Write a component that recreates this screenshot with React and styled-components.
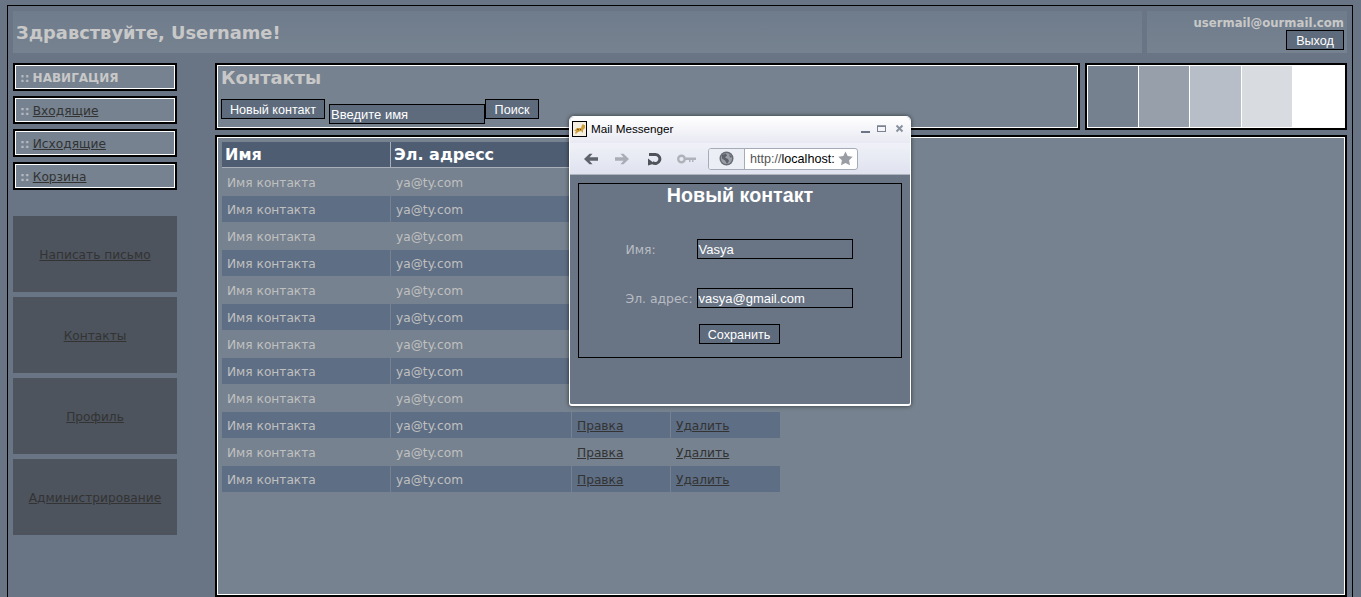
import React from 'react';
import styled, { createGlobalStyle } from 'styled-components';

const Global = createGlobalStyle`
  html, body { margin: 0; height: 597px; overflow: hidden; background: #697585; }
  body { font-family: "DejaVu Sans", sans-serif; }
  * { box-sizing: border-box; }
`;
const Frame = styled.div`
  position: relative; margin: 5px 8px 0 7px; height: 592px; padding: 5px 5px 0 5px;
  border: 1px solid #000; border-bottom: 0;
`;
const Header = styled.header`display: flex; gap: 5px; height: 42px;`;
const Cell = styled.div`background: linear-gradient(#6f7c8c, #76828f);`;
const Greeting = styled(Cell)`
  flex: 1; display: flex; align-items: center; padding: 0 3px;
  font-size: 17.85px; font-weight: bold; color: #c8c8c8;
`;
const Account = styled(Cell)`
  width: 200px; display: flex; flex-direction: column; align-items: flex-end; padding: 5px 3px 0 0;
  font-size: 11.7px; line-height: 14px; font-weight: bold; color: #c8c8c8;
`;
const Btn = styled.button`
  height: 20px; padding: 1px 8px 0; border: 1px solid #000; background: #5e6b7d; color: #fff;
  font: 12.6px "Liberation Sans", sans-serif;
`;
const ExitBtn = styled(Btn)`width: 58px; padding: 1px 0 0;`;
const SearchBtn = styled(Btn)`width: 54px; padding: 1px 0 0;`;
const Body = styled.div`display: flex; gap: 38px; margin-top: 10px;`;
const Side = styled.nav`width: 164px; flex: none; display: flex; flex-direction: column;`;
const framed = `border: 2px solid #000; box-shadow: inset 0 0 0 1px #fff;`;
const NavItem = styled.div`
  ${framed} height: 28px; margin-bottom: 5px; padding: 1px 5px 0; display: flex; align-items: center; gap: 3px;
  background: #76828f; font-size: ${p => p.$head ? '12px' : '12.2px'}; color: #c8c8c8;
  font-weight: ${p => p.$head ? 'bold' : 'normal'};
`;
const Dots = styled.span`color: #b4b9c0; font-weight: bold;`;
const NavLink = styled.a`color: #333; text-decoration: underline;`;
const Blocks = styled.div`display: flex; flex-direction: column; gap: 5px; margin-top: 21px;`;
const Block = styled.div`
  height: 76px; padding-top: 1px; background: #4d545e; display: flex; align-items: center; justify-content: center;
  font-size: 12.2px; color: #333; text-decoration: underline;
`;
const Main = styled.main`flex: 1; min-width: 0; display: flex; flex-direction: column; gap: 5px;`;
const TopRow = styled.div`display: flex; gap: 5px; height: 67px;`;
const ContactsPanel = styled.section`${framed} flex: 1; padding: 1px 4px; background: #76828f;`;
const Title = styled.h1`margin: 0; font-size: 17.85px; font-weight: bold; color: #c8c8c8; line-height: 23px;`;
const Tools = styled.div`display: flex; align-items: flex-start; margin-top: 10px;`;
const SearchBox = styled.div`
  width: 156px; height: 20px; margin: 5px 0 0 4px; border: 1px solid #000; background: #5e6b7d;
  color: #fff; font: 13px/20px "Liberation Sans", sans-serif; padding-left: 1px;
`;
const Swatches = styled.div`${framed} width: 262px; padding: 1px; display: flex; background: #fff;`;
const Swatch = styled.div`flex: 1; background: ${p => p.$c}; border-right: 1px solid #fff;`;
const TablePanel = styled.section`${framed} height: 462px; padding: 4px 0 0 5px; background: #76828f;`;
const Table = styled.table`
  border-collapse: separate; border-spacing: 0 1px; table-layout: fixed; width: 559px; font-size: 12.2px;
`;
const Th = styled.th`
  height: 26px; padding: 0 3px; text-align: left; font-size: 16px; color: #fff; background: #4e5d72;
  border-right: 1px solid #a9b0ba; border-bottom: 1px solid #a9b0ba;
`;
const Td = styled.td`
  height: 26px; padding: 1px 5px 0; color: #c0c0c0; background: ${p => p.$dark ? '#5e6e84' : 'transparent'};
  border-right: 1px solid #76828f;
  a { color: #333; }
`;
const Popup = styled.div`
  position: absolute; left: 561px; top: 110px; width: 342px; height: 290px; border-radius: 5px 5px 3px 3px;
  background: #697585; border: 1px solid #fff; border-bottom-width: 2px; box-shadow: 0 0 4px rgba(0,0,0,.6);
  overflow: hidden; display: flex; flex-direction: column;
`;
const TitleBar = styled.div`
  height: 26px; flex: none; display: flex; align-items: center; gap: 4px; padding: 0 6px 3px 2px;
  background: linear-gradient(#fff, #e8e9f2); font: 11.7px "Liberation Sans", sans-serif; color: #000;
`;
const AppIcon = styled.svg`flex: none;`;
const Spacer = styled.div`flex: 1;`;
const Toolbar = styled.div`
  height: 32px; flex: none; display: flex; align-items: center; padding: 0 0 0 14px;
  background: linear-gradient(#f0f1f8, #dfe2ef); border-bottom: 1px solid #aeb3bd;
`;
const ToolIcon = styled.svg`flex: none; margin-right: ${p => p.$mr}px;`;
const Address = styled.div`
  width: 150px; height: 22px; display: flex; border: 1px solid #a6abb8; border-radius: 3px; background: #fff; overflow: hidden;
`;
const Globe = styled.div`width: 36px; flex: none; display: flex; align-items: center; justify-content: center; background: #eceef5; border-right: 1px solid #a6abb8;`;
const Url = styled.div`
  flex: 1; min-width: 0; display: flex; align-items: center; justify-content: space-between; padding: 0 4px 0 5px;
  font: 12.6px "Liberation Sans", sans-serif; color: #000; white-space: nowrap;
  span { color: #555; }
`;
const Form = styled.form`
  margin: 8px 8px 0 8px; height: 175px; border: 1px solid #000; display: flex; flex-direction: column; align-items: center;
`;
const FormTitle = styled.h2`margin: 0; font: bold 19.7px "Liberation Sans", sans-serif; color: #fff;`;
const Field = styled.div`display: flex; align-items: center; width: 227px; margin: ${p => p.$mt}px 2px 0 0;`;
const Label = styled.label`width: 71px; flex: none; font-size: 12.4px; color: #b8bcc2;`;
const Input = styled.div`
  width: 156px; height: 20px; border: 1px solid #000; padding-left: 1px; color: #fff;
  font: 13px/19px "Liberation Sans", sans-serif;
`;
const SaveBtn = styled(Btn)`margin: 16px 2px 0 0; width: 81px; padding: 1px 0 0;`;

const rows = Array.from({ length: 12 }, (_, i) => i);

export default function App() {
  return (
    <Frame>
      <Global />
      <Header>
        <Greeting>Здравствуйте, Username!</Greeting>
        <Account>usermail@ourmail.com<ExitBtn>Выход</ExitBtn></Account>
      </Header>
      <Body>
        <Side>
          <NavItem $head><Dots>::</Dots>НАВИГАЦИЯ</NavItem>
          <NavItem><Dots>::</Dots><NavLink>Входящие</NavLink></NavItem>
          <NavItem><Dots>::</Dots><NavLink>Исходящие</NavLink></NavItem>
          <NavItem><Dots>::</Dots><NavLink>Корзина</NavLink></NavItem>
          <Blocks>
            <Block>Написать письмо</Block>
            <Block>Контакты</Block>
            <Block>Профиль</Block>
            <Block>Администрирование</Block>
          </Blocks>
        </Side>
        <Main>
          <TopRow>
            <ContactsPanel>
              <Title>Контакты</Title>
              <Tools><Btn>Новый контакт</Btn><SearchBox>Введите имя</SearchBox><SearchBtn>Поиск</SearchBtn></Tools>
            </ContactsPanel>
            <Swatches>
              {['#75818f', '#979fab', '#b8bec7', '#d8dbdf', '#fff'].map(c => <Swatch key={c} $c={c} />)}
            </Swatches>
          </TopRow>
          <TablePanel>
            <Table>
              <colgroup><col width="169" /><col width="181" /><col width="99" /><col width="110" /></colgroup>
              <thead><tr><Th>Имя</Th><Th>Эл. адресс</Th><Th /><Th /></tr></thead>
              <tbody>
                {rows.map(i => (
                  <tr key={i}>
                    <Td $dark={i % 2 === 1}>Имя контакта</Td>
                    <Td $dark={i % 2 === 1}>ya@ty.com</Td>
                    <Td $dark={i % 2 === 1}><a href="#e">Правка</a></Td>
                    <Td $dark={i % 2 === 1}><a href="#d">Удалить</a></Td>
                  </tr>
                ))}
              </tbody>
            </Table>
          </TablePanel>
        </Main>
      </Body>
      <Popup>
        <TitleBar>
          <AppIcon width="15" height="16" viewBox="0 0 15 16">
            <rect x=".5" y=".5" width="14" height="15" fill="#f4efe0" stroke="#000" />
            <path d="M2 10 L5 7 L9 7 L10 4 L11 3 L12 4 L13 4 L13 7 L11 9 L11 12 L9 10 L6 11 L4 13 L3 12 L4 10Z" fill="#cf9f3e" />
            <path d="M5 8l2 1M8 8l1 1" stroke="#6b4a14" />
          </AppIcon>
          Mail Messenger
          <Spacer />
          <svg width="43" height="10" viewBox="0 0 43 10">
            <path d="M0 8h9" stroke="#6c7585" strokeWidth="2" />
            <rect x="16.500" y="2.500" width="8" height="5" fill="none" stroke="#7a8291" />
            <path d="M16 2h9" stroke="#7a8291" strokeWidth="1.500" />
            <path d="M35.500 1.500l6 6M41.500 1.500l-6 6" stroke="#8a92a0" strokeWidth="2" />
          </svg>
        </TitleBar>
        <Toolbar>
          <ToolIcon $mr={17} width="14" height="12" viewBox="0 0 14 12">
            <path d="M0 6L5.500 .7H8.500L5.500 4.300H14V7.700H5.500L8.500 11.300H5.500Z" fill="#5f646c" />
          </ToolIcon>
          <ToolIcon $mr={18} width="14" height="12" viewBox="0 0 14 12">
            <path d="M14 6L8.500 .7H5.500L8.500 4.300H0V7.700H8.500L5.500 11.300H8.500Z" fill="#a9adb6" />
          </ToolIcon>
          <ToolIcon $mr={15} width="15" height="14" viewBox="0 0 15 14">
            <path d="M2 2.500H8.500A4.500 4.500 0 1 1 5.500 10.500" fill="none" stroke="#4f535a" strokeWidth="3" />
            <path d="M1 6.500L7.500 11.500L1 13.500Z" fill="#4f535a" />
          </ToolIcon>
          <ToolIcon $mr={12} width="19" height="10" viewBox="0 0 19 10">
            <circle cx="4.500" cy="5" r="3.300" fill="none" stroke="#afb2b9" strokeWidth="2.400" />
            <path d="M8 3.500H19V6H8Z" fill="#afb2b9" />
            <path d="M12 6h1.500v2H12ZM15 6h1.500v2H15Z" fill="#afb2b9" />
          </ToolIcon>
          <Address>
            <Globe>
              <svg width="15" height="15" viewBox="0 0 15 15">
                <circle cx="7.500" cy="7.500" r="7" fill="#676c74" />
                <circle cx="7.500" cy="7.500" r="5.500" fill="#9ba0a8" />
                <path d="M3 4l4-1.500 1 2-2 2 3 1.500 1 2-2 3-2-3.500-3-2zM10 3l3 3-2 .5z" fill="#5d6169" />
              </svg>
            </Globe>
            <Url>
              <div><span>http://</span>localhost:</div>
              <svg width="15" height="15" viewBox="0 0 15 15">
                <path d="M7.500 .5l2.200 4.600 5 .7-3.600 3.500.9 5-4.500-2.400L3 14.300l.9-5L.3 5.800l5-.7z" fill="#9a9da3" />
              </svg>
            </Url>
          </Address>
        </Toolbar>
        <Form>
          <FormTitle>Новый контакт</FormTitle>
          <Field $mt={32}><Label>Имя:</Label><Input>Vasya</Input></Field>
          <Field $mt={29}><Label>Эл. адрес:</Label><Input>vasya@gmail.com</Input></Field>
          <SaveBtn type="button">Сохранить</SaveBtn>
        </Form>
      </Popup>
    </Frame>
  );
}
